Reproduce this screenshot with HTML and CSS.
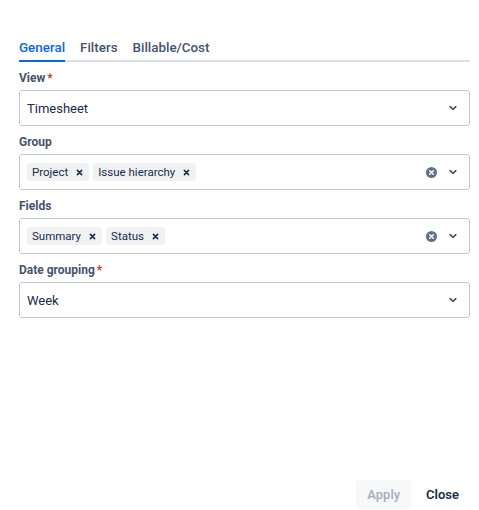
FILE: index.html
```html
<!DOCTYPE html>
<html>
<head>
<meta charset="utf-8">
<link rel="stylesheet" href="styles.css">
</head>
<body>
<div class="page">
  <div class="tabs">
    <div class="tab active">General</div>
    <div class="tab">Filters</div>
    <div class="tab">Billable/Cost</div>
  </div>

  <div class="field">
    <div class="label">View<span class="req">*</span></div>
    <div class="select">
      <div class="value">Timesheet</div>
      <div class="icons">
        <svg class="chev" width="8" height="8" viewBox="0 0 8 8"><path d="M1.2 2.6 L4 5.4 L6.8 2.6" fill="none" stroke="#44546F" stroke-width="1.6" stroke-linecap="round" stroke-linejoin="round"/></svg>
      </div>
    </div>
  </div>

  <div class="field">
    <div class="label">Group</div>
    <div class="select">
      <div class="tags">
        <span class="tag">Project<svg class="tx" width="7" height="7" viewBox="0 0 8 8"><path d="M1.6 1.6 L6.4 6.4 M6.4 1.6 L1.6 6.4" stroke="#172B4D" stroke-width="1.8" stroke-linecap="round"/></svg></span>
        <span class="tag">Issue hierarchy<svg class="tx" width="7" height="7" viewBox="0 0 8 8"><path d="M1.6 1.6 L6.4 6.4 M6.4 1.6 L1.6 6.4" stroke="#172B4D" stroke-width="1.8" stroke-linecap="round"/></svg></span>
      </div>
      <div class="icons">
        <svg class="clear" width="11" height="11" viewBox="0 0 12 12"><circle cx="6" cy="6" r="6" fill="#626F86"/><path d="M4 4 L8 8 M8 4 L4 8" stroke="#fff" stroke-width="1.6" stroke-linecap="round"/></svg>
        <svg class="chev" width="8" height="8" viewBox="0 0 8 8"><path d="M1.2 2.6 L4 5.4 L6.8 2.6" fill="none" stroke="#44546F" stroke-width="1.6" stroke-linecap="round" stroke-linejoin="round"/></svg>
      </div>
    </div>
  </div>

  <div class="field">
    <div class="label">Fields</div>
    <div class="select">
      <div class="tags">
        <span class="tag">Summary<svg class="tx" width="7" height="7" viewBox="0 0 8 8"><path d="M1.6 1.6 L6.4 6.4 M6.4 1.6 L1.6 6.4" stroke="#172B4D" stroke-width="1.8" stroke-linecap="round"/></svg></span>
        <span class="tag">Status<svg class="tx" width="7" height="7" viewBox="0 0 8 8"><path d="M1.6 1.6 L6.4 6.4 M6.4 1.6 L1.6 6.4" stroke="#172B4D" stroke-width="1.8" stroke-linecap="round"/></svg></span>
      </div>
      <div class="icons">
        <svg class="clear" width="11" height="11" viewBox="0 0 12 12"><circle cx="6" cy="6" r="6" fill="#626F86"/><path d="M4 4 L8 8 M8 4 L4 8" stroke="#fff" stroke-width="1.6" stroke-linecap="round"/></svg>
        <svg class="chev" width="8" height="8" viewBox="0 0 8 8"><path d="M1.2 2.6 L4 5.4 L6.8 2.6" fill="none" stroke="#44546F" stroke-width="1.6" stroke-linecap="round" stroke-linejoin="round"/></svg>
      </div>
    </div>
  </div>

  <div class="field">
    <div class="label">Date grouping<span class="req">*</span></div>
    <div class="select">
      <div class="value">Week</div>
      <div class="icons">
        <svg class="chev" width="8" height="8" viewBox="0 0 8 8"><path d="M1.2 2.6 L4 5.4 L6.8 2.6" fill="none" stroke="#44546F" stroke-width="1.6" stroke-linecap="round" stroke-linejoin="round"/></svg>
      </div>
    </div>
  </div>

  <div class="footer">
    <button class="btn apply" disabled>Apply</button>
    <button class="btn close">Close</button>
  </div>
</div>
</body>
</html>
```
FILE: styles.css
```css
html, body {
  margin: 0;
  padding: 0;
  background: #fff;
}
.page {
  box-sizing: border-box;
  height: 510px;
  padding: 38px 9px 1px 19px;
  display: flex;
  flex-direction: column;
  font-family: Roboto, "Liberation Sans", sans-serif;
  color: #172B4D;
}
.tabs {
  display: flex;
  gap: 15px;
  box-shadow: inset 0 -2px 0 #DCDFE4;
  margin-bottom: 8px;
}
.tab {
  font-size: 13.4px;
  font-weight: 500;
  line-height: 20px;
  padding-bottom: 4px;
  color: #44546F;
}
.tab.active {
  color: #0C66E4;
  box-shadow: inset 0 -2px 0 #0C66E4;
}
.field {
  margin-bottom: 8px;
}
.label {
  font-size: 12px;
  font-weight: 700;
  line-height: 16px;
  color: #44546F;
  margin-bottom: 4px;
}
.req {
  color: #C9372C;
  margin-left: 2px;
}
.select {
  box-sizing: border-box;
  height: 36px;
  border: 1px solid #C1C7D0;
  border-radius: 3px;
  display: flex;
  align-items: center;
  padding: 0 12px 0 7px;
}
.value {
  flex: 1;
  font-size: 13px;
  color: #172B4D;
}
.tags {
  flex: 1;
  display: flex;
  gap: 4px;
}
.tag {
  display: inline-flex;
  align-items: center;
  height: 18px;
  background: #F1F2F4;
  border-radius: 3px;
  padding: 0 6px 0 5px;
  font-size: 11.5px;
  color: #172B4D;
  gap: 8px;
}
.icons {
  display: flex;
  align-items: center;
  gap: 12px;
}
.clear, .chev {
  display: block;
}
.footer {
  margin-top: auto;
  display: flex;
  justify-content: flex-end;
  gap: 4px;
}
.btn {
  font-family: Roboto, "Liberation Sans", sans-serif;
  font-size: 13px;
  font-weight: 500;
  height: 29px;
  padding: 0 11px;
  border: none;
  border-radius: 3px;
  background: transparent;
}
.btn.apply {
  background: #F7F8F9;
  color: #A5ADBA;
}
.btn.close {
  color: #172B4D;
  font-weight: 600;
}
```
